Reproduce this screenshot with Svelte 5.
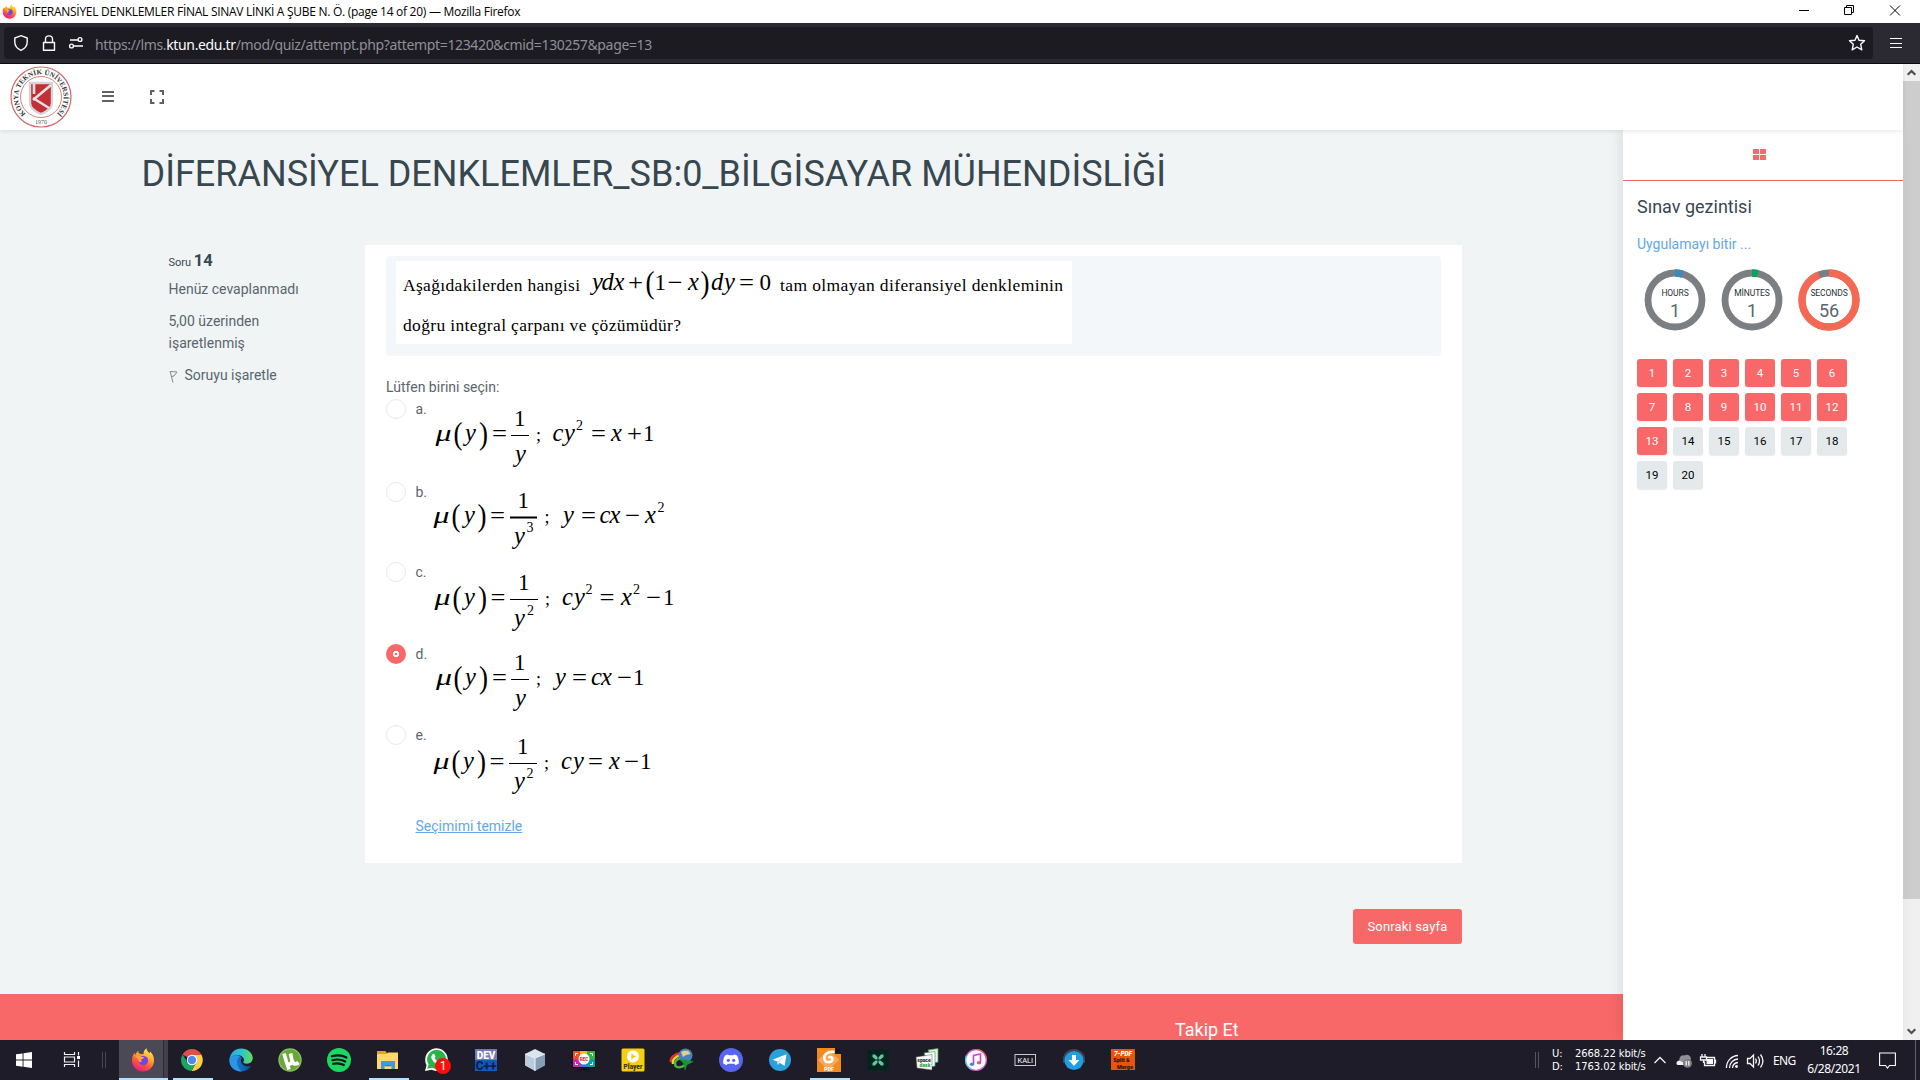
<script>
  const formulas = [
    {
      letter: 'a.', height: 83, top: 399, rule: [511, 529, 435.5, 1],
      parts: [
        ['u', 435.5, 441, 'μ'], ['p', 453.5, 443.5, '('], ['i', 465, 441, 'y'], ['p', 479, 443.5, ')'],
        ['o', 492, 441, '='], ['n', 514, 426, '1'], ['i', 515, 462, 'y'], ['t', 536, 441, ';'],
        ['i', 552.5, 441, 'c'], ['i', 564, 441, 'y'], ['s', 576, 430, '2'], ['o', 591, 441, '='],
        ['i', 611, 441, 'x'], ['o', 627, 441, '+'], ['n', 643, 441, '1']
      ]
    },
    {
      letter: 'b.', height: 80, top: 482, rule: [510, 537, 517, 2],
      parts: [
        ['u', 433.5, 523, 'μ'], ['p', 451.5, 525.5, '('], ['i', 464, 523, 'y'], ['p', 477.5, 525.5, ')'],
        ['o', 490, 523, '='], ['n', 517.5, 508, '1'], ['i', 514, 544, 'y'], ['s', 526.5, 532, '3'], ['t', 544.5, 523, ';'],
        ['i', 563, 523, 'y'], ['o', 581, 523, '='], ['i', 599.5, 523, 'c'], ['i', 609.5, 523, 'x'],
        ['o', 625, 523, '−'], ['i', 645, 523, 'x'], ['s', 657.5, 512, '2']
      ]
    },
    {
      letter: 'c.', height: 82, top: 562, rule: [510, 538, 599.5, 1],
      parts: [
        ['u', 434.5, 605, 'μ'], ['p', 452.5, 607.5, '('], ['i', 464, 605, 'y'], ['p', 478, 607.5, ')'],
        ['o', 490.5, 605, '='], ['n', 518, 590, '1'], ['i', 514, 626, 'y'], ['s', 527, 614.5, '2'], ['t', 545, 605, ';'],
        ['i', 562, 605, 'c'], ['i', 574, 605, 'y'], ['s', 585.5, 594, '2'], ['o', 599.5, 605, '='],
        ['i', 621, 605, 'x'], ['s', 633, 594, '2'], ['o', 646, 605, '−'], ['n', 663, 605, '1']
      ]
    },
    {
      letter: 'd.', height: 81, top: 644, rule: [511, 529, 679.5, 1],
      parts: [
        ['u', 436, 685, 'μ'], ['p', 453.5, 687.5, '('], ['i', 465, 685, 'y'], ['p', 479, 687.5, ')'],
        ['o', 492, 685, '='], ['n', 514, 670, '1'], ['i', 515, 706, 'y'], ['t', 536, 685, ';'],
        ['i', 555, 685, 'y'], ['o', 572, 685, '='], ['i', 591, 685, 'c'], ['i', 601, 685, 'x'],
        ['o', 617, 685, '−'], ['n', 633, 685, '1']
      ]
    },
    {
      letter: 'e.', height: 81, top: 725, rule: [509, 537, 763.5, 1],
      parts: [
        ['u', 433.5, 769, 'μ'], ['p', 451.5, 771.5, '('], ['i', 463, 769, 'y'], ['p', 477, 771.5, ')'],
        ['o', 489.5, 769, '='], ['n', 517, 754, '1'], ['i', 514, 789, 'y'], ['s', 526.5, 778, '2'], ['t', 544, 769, ';'],
        ['i', 561, 769, 'c'], ['i', 573, 769, 'y'], ['o', 588, 769, '='], ['i', 609, 769, 'x'],
        ['o', 624, 769, '−'], ['n', 640, 769, '1']
      ]
    }
  ];
  const stem = [
    ['i', 592, 290, 'y'], ['i', 601.5, 290, 'd'], ['i', 613.5, 290, 'x'], ['o', 628, 290, '+'],
    ['p', 645.5, 292.5, '('], ['n', 654.5, 290, '1'], ['o', 667.5, 290, '−'], ['i', 688, 290, 'x'],
    ['p', 700.5, 292.5, ')'], ['i', 711, 290, 'd'], ['i', 724, 290, 'y'], ['o', 739, 290, '='], ['n', 759.5, 290, '0']
  ];
  // widths, in px, of the stretched symbols: mu, parentheses, operators
  const stretch = { u: 16, p: 9, o: 15 };
  const pages = Array.from({ length: 20 }, (_, i) => i + 1);
  const timers = [
    { label: 'HOURS', value: 1, color: '#398bbd', base: '#7b7e82', part: 4.5 },
    { label: 'MİNUTES', value: 1, color: '#00a65a', base: '#7b7e82', part: 3.5 },
    { label: 'SECONDS', value: 56, color: '#f56954', base: '#7b7e82', part: 94 }
  ];
  const apps = ['firefox', 'chrome', 'edge', 'utorrent', 'spotify', 'explorer', 'whatsapp', 'devcpp', 'vbox', 'rec', 'player', 'idm', 'discord', 'telegram', 'foxit', 'camtasia', 'spacedesk', 'itunes', 'kali', 'downloader', 'pdf7'];
  const running = ['chrome', 'explorer', 'foxit'];
</script>

{#snippet glyphs(parts)}
  {#each parts as [kind, x, y, t]}
    <text class="m {kind}" {x} {y} textLength={stretch[kind]} lengthAdjust={stretch[kind] ? 'spacingAndGlyphs' : undefined}>{t}</text>
  {/each}
{/snippet}

{#snippet firefox()}
  <defs>
    <linearGradient id="fx" x1=".8" y1="0" x2=".3" y2="1">
      <stop offset="0" stop-color="#fff14a" /><stop offset=".35" stop-color="#ffb02e" />
      <stop offset=".65" stop-color="#ff5a36" /><stop offset="1" stop-color="#e8188c" />
    </linearGradient>
  </defs>
  <path fill="url(#fx)" d="M12 23.5C5.500 23.500 1 18.500 1 12.500 1 9 2.200 6.500 3.500 4.800 3.700 5.800 4 6.500 4.500 7 5 5 6 3.500 7.200 3 7 4.500 8 5.500 9.500 6 11 6 12 6.200 12.500 6.500 12.300 4 13.500 1.500 15.500.3 15.500 2.500 17 3.700 18.500 5.200 19 4.700 19 4 19 3.500 21.500 5.500 23.300 9 23 13 22.600 19 18 23.500 12 23.500Z" />
  <circle cx="12.300" cy="12.700" r="4.800" fill="#7543e0" />
  <path fill="#ffa436" d="M4 7.500C6.500 6.500 9 8 10 8.700L13.300 9.200C12.800 10.600 11.500 10.700 10.500 11.200 10 12 10 13 11 13.500 9 15 7 13.500 7.300 11.500 6.500 10 5 9.500 4 7.500Z" />
{/snippet}

{#snippet appIcon(name)}
  <svg width="24" height="24" viewBox="0 0 24 24">
    {#if name === 'firefox'}
      {@render firefox()}
    {:else if name === 'chrome'}
      <path fill="#dd5144" d="M12 12 2.500 6.500A11 11 0 0 1 21.500 6.500L21.800 7H12Z" />
      <path fill="#ffcd46" d="M12 12 21.600 7A11 11 0 0 1 11.500 23L16.300 14.500 12 7H21.600" />
      <path fill="#1da462" d="M2.500 6.500A11 11 0 0 0 11.500 23L16.300 14.500 12 17 7.700 14.500Z" />
      <circle cx="12" cy="12" r="5.200" fill="#fff" /><circle cx="12" cy="12" r="4.200" fill="#4c8bf5" />
    {:else if name === 'edge'}
      <defs>
        <linearGradient id="edg" x1="0" x2="1"><stop offset="0" stop-color="#2aa8e8" /><stop offset=".55" stop-color="#2fc6c9" /><stop offset="1" stop-color="#6bdb4b" /></linearGradient>
        <linearGradient id="edb" x1="0" x2="1"><stop offset="0" stop-color="#1b8ade" /><stop offset="1" stop-color="#0a4f9e" /></linearGradient>
      </defs>
      <path fill="url(#edb)" d="M.5 11C1 8 6 6 10.500 7.500L13 10C11 11.500 11 17 18 18.300 20 18.600 21.500 18 22.300 17.300 20.500 21 16.500 23.500 12 23.500 5.500 23.500-.3 18 .5 11Z" />
      <path fill="#2b97e4" d="M.5 12C2 8 7 6.500 11 8.500 7 10.500 6.500 18 12.500 23.400 5.500 23.500 0 18.500 .5 12Z" />
      <path fill="url(#edg)" d="M.5 11.500C1 5 6 .5 12 .5 19 .5 23.800 5.500 23.800 10 23.800 13.500 21 15.700 18 15.700 15 15.700 13.700 14.800 14.400 13.800 15.800 11.800 14.500 8.300 10.500 7.300 6 6.500 2 8 .5 11.500Z" />
    {:else if name === 'utorrent'}
      <circle cx="12" cy="12" r="11.700" fill="#8cc063" /><circle cx="12" cy="12" r="10.500" fill="#68a83b" />
      <path fill="none" stroke="#fff" stroke-width="3.600" d="M6 5.500 8.500 14C9.500 17.500 14.500 16.500 14 12.500L12.500 5.500M14.500 13C15.500 17 18 16.500 20.500 14.500M8.500 14 11 21.500" />
    {:else if name === 'spotify'}
      <circle cx="12" cy="12" r="12" fill="#1ed760" />
      <path fill="none" stroke="#12131a" stroke-linecap="round" stroke-width="2.200" d="M4.800 8.300C10 6.800 15.500 7.300 19.500 9.500M5.500 12.200C10 11 14.500 11.500 18.200 13.500M6.200 15.800C10 14.900 13.700 15.300 16.800 17" />
    {:else if name === 'explorer'}
      <path fill="#e5a50f" d="M1 3H9.500L11 5V8H1Z" /><path fill="#ffd869" d="M1 6H10.500L12 4.500H22V21H1Z" />
      <path fill="#3f98e0" d="M5 13H19V21H15.500V17H8.500V21H5Z" /><path fill="#2d7fc9" d="M8.500 17H15.500V18.300H8.500Z" />
    {:else if name === 'whatsapp'}
      <path fill="#fff" d="M0 23 1.500 17A11.300 11.300 0 1 1 6.500 21.800Z" /><path fill="#29b545" d="M2.200 20.800 3.600 16.500A9.500 9.500 0 1 1 7 19.700Z" />
      <path fill="#fff" d="M8 6 9.200 5.800 10.500 8.500 9.500 10C10.500 12 12 13 13.500 13.700L15 12.500 17.500 13.800C17.500 16 15.500 17 13.500 16.500 9.500 15.500 7 12.300 6.300 10 6 8.500 7 6.500 8 6Z" />
      <circle cx="18" cy="18" r="8" fill="#fb0f0c" /><text x="18" y="22.300" text-anchor="middle" font-size="12" fill="#fff">1</text>
    {:else if name === 'devcpp'}
      <path fill="#7779b5" d="M1 1H23V12H1Z" /><path fill="#1259b8" d="M1 12H23V23H1Z" />
      <text x="12" y="11" class="bold" text-anchor="middle" font-size="10" fill="#fff">DEV</text><text x="12" y="22" class="bold" text-anchor="middle" font-size="12" fill="#0a1e52">C++</text>
    {:else if name === 'vbox'}
      <path fill="#d8e4ee" d="M12 1 22 6 12 10 2 6Z" /><path fill="#b9cbdc" d="M2 6 12 10V23L2 17.500Z" /><path fill="#859fb8" d="M22 6 12 10V23L22 17.500Z" /><path fill="none" stroke="#eef6fb" d="M2 6 12 10 22 6M12 10V23" />
    {:else if name === 'rec'}
      <path fill="#111" d="M0 2H24V20H15V21.500H19V22.500H5V21.500H9V20H0Z" />
      <path fill="#f04e23" d="M1 3H8V11H1Z" /><path fill="#f5b915" d="M8 3H15V11H8Z" /><path fill="#37b34a" d="M15 3H23V11H15Z" /><path fill="#c42bb0" d="M1 11H9V19H1Z" /><path fill="#2a7de1" d="M9 11H16V19H9Z" /><path fill="#00a79d" d="M16 11H23V19H16Z" />
      <path fill="none" stroke="#fff" d="M3.500 8V5.500H6M18 5.500H20.500V8M3.500 14V16.500H6M18 16.500H20.500V14" /><circle cx="12" cy="11" r="5.500" fill="#fff" /><text x="12" y="12.800" class="bold" text-anchor="middle" font-size="4.600" fill="#e32a35">REC</text>
    {:else if name === 'player'}
      <rect x=".5" y=".5" width="23" height="23" rx="1.500" fill="#f4cf14" /><circle cx="12" cy="8.500" r="6" fill="#fff" /><path fill="#f4cf14" d="M10.300 5.500 15 8.500 10.300 11.500Z" /><text x="12" y="21" class="bold" text-anchor="middle" font-size="6.500" fill="#3c3305">Player</text>
    {:else if name === 'idm'}
      <g fill="none" stroke-width="2.400"><path stroke="#e23329" d="M11 5C4 6 0 10 .8 14" /><path stroke="#f4d229" d="M11 7.500C5 8 2 12 3 16" /><path stroke="#4bb748" d="M11 10C6 11 4 14 5.500 18 8 20.500 12 19 15 17" /></g>
      <circle cx="15.500" cy="7.500" r="7" fill="#4a81bd" /><path fill="#e0cf8e" d="M11 4C14 1.500 17 3.500 18 2.500L20.500 6 16 7 13 9Z" />
      <path fill="#15972e" d="M10 11 24 13.500 17 17 15 23 13.500 16Z" />
    {:else if name === 'discord'}
      <circle cx="12" cy="12" r="12" fill="#5865f2" />
      <path fill="#fff" d="M8.500 6.500 10 7.300H14L15.500 6.500 18 7.500C19.500 10 20 12.500 19.800 15.500L16.500 17.300 15.300 15.700H8.700L7.500 17.300 4.200 15.500C4 12.500 4.500 10 6 7.500Z" /><circle cx="9.300" cy="12.300" r="1.600" fill="#5865f2" /><circle cx="14.700" cy="12.300" r="1.600" fill="#5865f2" />
    {:else if name === 'telegram'}
      <circle cx="12" cy="12" r="11" fill="#2ca0da" /><path fill="#fff" d="M4.500 11.800 18.500 6.300 16.500 18 11.800 14.800 9.800 17 9.300 13.500Z" /><path fill="#b9d9ec" d="M9.300 13.500 16 8.500 11 14.500 9.800 17Z" />
    {:else if name === 'foxit'}
      <path fill="#f28a1e" d="M0 0H18V6H24V24H0Z" /><path fill="#111" d="M19.500 0 24 4.500H19.500Z" /><path fill="#f8aa56" d="M1 12 12 2 22 12 15 19H8Z" />
      <path fill="none" stroke="#fff" stroke-width="2.500" d="M17.500 4C10 3 6 7 7.500 11.500 9 15.500 15.500 15 15.500 10.500 14.500 8.500 12.500 8.800 11.500 10" /><text x="12" y="22.500" class="bold" text-anchor="middle" font-size="5.500" fill="#fff">PDF</text>
    {:else if name === 'camtasia'}
      <rect x="1.500" y="1.500" width="21" height="21" rx="3" fill="#04231d" />
      <path fill="#63c7a5" d="M6.500 6.500H9L11.500 9V11.500H9.500L6.500 9ZM17.500 6.500V9L14.500 11.500H12.500V9.500L15 6.500ZM6.500 17.500V15L9.500 12.500H11.500V14.500L9 17.500ZM17.500 17.500H15L12.500 15V12.500H14.500L17.500 15Z" />
    {:else if name === 'spacedesk'}
      <path fill="#e8f1e6" stroke="#4b9f5b" stroke-width=".7" d="M13 2 23 .5V14L19 15Z" /><path fill="#fff" stroke="#4b9f5b" stroke-width=".7" d="M9 5 20 3.500V18L15 19Z" /><path fill="#f7f7f7" stroke="#555" stroke-width=".5" d="M1 9 17 6.500V22L2 20Z" />
      <text x="9" y="14" class="bold" text-anchor="middle" font-size="5" fill="#333">space</text><text x="10" y="19" class="bold" text-anchor="middle" font-size="5" fill="#25a244">desk</text>
    {:else if name === 'itunes'}
      <circle cx="12" cy="12" r="11" fill="#d962c9" /><path fill="#5fc3f0" d="M2 7A11 11 0 0 0 8 22.200Z" /><path fill="#f05a6f" d="M12 1A11 11 0 0 1 23 12H12Z" /><circle cx="12" cy="12" r="9.700" fill="#fff" />
      <path fill="none" stroke="#c04bd3" stroke-width="1.700" d="M9.500 16V7.500L16.500 6V14.500" /><ellipse cx="8" cy="16.200" rx="2.200" ry="1.800" fill="#5a78e8" /><ellipse cx="15" cy="14.800" rx="2.200" ry="1.800" fill="#ee4c82" />
    {:else if name === 'kali'}
      <rect x="2" y="6.500" width="20.500" height="11" fill="none" stroke="#c9c9cf" /><text x="12.300" y="14.700" text-anchor="middle" font-size="7.500" fill="#fff">KALI</text>
    {:else if name === 'downloader'}
      <path fill="none" stroke="#434653" stroke-width="2" d="M2 15V11A10 9 0 0 1 22 11V15" /><circle cx="12" cy="12.500" r="9.500" fill="#1f9fe3" /><path fill="#fff" d="M10 7H14V12H17.500L12 18 6.500 12H10Z" />
    {:else}
      <path fill="#e8530e" d="M0 1H24V22H0Z" /><text x="12" y="7.500" class="bold" font-style="italic" text-anchor="middle" font-size="6.500" fill="#fff">7-PDF</text><text x="10.500" y="14" class="bold" text-anchor="middle" font-size="5.500" fill="#331505">Split &amp;</text><text x="14" y="20.500" class="bold" text-anchor="middle" font-size="5.500" fill="#331505">Merge</text>
    {/if}
  </svg>
{/snippet}

<div class="screen">
  <div class="titlebar">
    <svg width="15" height="15" viewBox="0 0 24 24">{@render firefox()}</svg>
    <span class="wtitle">DİFERANSİYEL DENKLEMLER FİNAL SINAV LİNKİ A ŞUBE N. Ö. (page 14 of 20) — Mozilla Firefox</span>
    <svg class="winctl" width="110" height="23" viewBox="0 0 110 23" fill="none" stroke="#000">
      <path d="M4 10.500H14M49.500 7.500H56.500V14.500H49.500ZM51.500 7V5.500H58.500V12.500H57M95 5.500 105 15.500M105 5.500 95 15.500" />
    </svg>
  </div>

  <div class="navbar">
    <div class="url">
      <svg width="64" height="18" viewBox="0 0 64 18" fill="none" stroke="#fbfbfe" stroke-width="1.400">
        <path d="M7 1.700 13.200 4V8C13.200 12 10.800 14.700 7 16.400 3.200 14.700.8 12 .8 8V4Z" />
        <path d="M29.500 8.500H40.500V16.300H29.500ZM31.500 8.500V5C31.500.8 38.500.8 38.500 5V8.500" stroke-linejoin="round" />
        <path d="M57 6H65M61 12H70" transform="translate(-1)" /><circle cx="67" cy="5.500" r="1.900" transform="translate(-1)" /><circle cx="58.500" cy="12" r="1.900" transform="translate(-1)" />
      </svg>
      <span class="addr">https://lms.<b>ktun.edu.tr</b>/mod/quiz/attempt.php?attempt=123420&amp;cmid=130257&amp;page=13</span>
      <svg class="star" width="18" height="18" viewBox="0 0 18 18" fill="none" stroke="#fbfbfe" stroke-width="1.400" stroke-linejoin="round"><path d="M9 1.500 11 6.200 16.500 6.700 12.700 10.300 13.800 15.800 9 13 4.200 15.800 5.300 10.300 1.500 6.700 7 6.200Z" /></svg>
    </div>
    <svg class="burger" width="12" height="11" viewBox="0 0 12 11" stroke="#fbfbfe"><path d="M0 .5H12M0 5.500H12M0 9.500H12" /></svg>
  </div>

  <div class="browser">
    <div class="page">
      <header>
        <svg class="logo" width="62" height="62" viewBox="-31 -31 62 62">
          <circle r="30" fill="#fff" stroke="#cf6a6b" stroke-width="1.200" /><circle r="20.500" fill="none" stroke="#d88284" stroke-width="1" />
          <path id="ring" fill="none" d="M-14.500 17.500A22.700 22.700 0 1 1 14.500 17.500" />
          <text class="ringtext"><textPath href="#ring" textLength="108" startOffset="1">KONYA TEKNİK ÜNİVERSİTESİ</textPath></text>
          <path fill="#c22f34" stroke="#d4d4d8" stroke-width="2.400" d="M-11-14H11V6C11 12 5 15 0 17-5 15-11 12-11 6Z" />
          <path fill="none" stroke="#e4e2e3" stroke-width="2.600" d="M-7-13V-3M-8 1 8 11M-8 3 10-12" />
          <text x="0" y="27" text-anchor="middle" class="year">1970</text>
        </svg>
        <svg width="12" height="12" viewBox="0 0 12 12" stroke="#616161" stroke-width="2"><path d="M0 1H12M0 5H12M0 10H12" /></svg>
        <svg class="full" width="14" height="14" viewBox="0 0 14 14" fill="none" stroke="#616161" stroke-width="2"><path d="M1 5V1H4.500M9.500 1H13V5M13 9V13H9.500M4.500 13H1V9" /></svg>
      </header>

      <div class="body">
        <main>
          <h1>DİFERANSİYEL DENKLEMLER_SB:0_BİLGİSAYAR MÜHENDİSLİĞİ</h1>
          <div class="question">
            <aside class="info">
              <div class="no">Soru <b>14</b></div>
              <div class="state">Henüz cevaplanmadı</div>
              <div class="grade">5,00 üzerinden<br />işaretlenmiş</div>
              <div class="flag">
                <svg width="9" height="11" viewBox="0 0 9 11" fill="none" stroke="#85898d"><path d="M1 1 4 12.500M1.500 1.500 8 2 5 6 2.500 6.500" /></svg>Soruyu işaretle
              </div>
            </aside>
            <section class="card">
              <div class="stem">
                <svg class="stemimg" width="676" height="83" viewBox="396 261 676 83">
                  <text class="serif" x="403" y="291" textLength="177">Aşağıdakilerden hangisi</text>
                  {@render glyphs(stem)}
                  <text class="serif" x="780" y="291" textLength="283">tam olmayan diferansiyel denkleminin</text>
                  <text class="serif" x="403" y="331" textLength="278">doğru integral çarpanı ve çözümüdür?</text>
                </svg>
              </div>
              <div class="prompt">Lütfen birini seçin:</div>
              {#each formulas as f}
                <div class="option" style:height="{f.height}px">
                  <span class="radio" class:on={f.letter === 'd.'}></span>
                  <span class="letter">{f.letter}</span>
                  <svg width="260" height="70" viewBox="430 {f.top} 260 70">
                    {@render glyphs(f.parts)}
                    <rect x={f.rule[0]} y={f.rule[2] - 0.5} width={f.rule[1] - f.rule[0]} height={f.rule[3]} />
                  </svg>
                </div>
              {/each}
              <a class="clear" href="#clear">Seçimimi temizle</a>
            </section>
          </div>
          <div class="actions"><button class="next">Sonraki sayfa</button></div>
          <footer><span>Takip Et</span></footer>
        </main>

        <aside class="side">
          <div class="tab">
            <svg width="13" height="11" viewBox="0 0 13 11" fill="#f96868"><rect width="6" height="5" rx=".5" /><rect x="7" width="6" height="5" rx=".5" /><rect y="6" width="6" height="5" rx=".5" /><rect x="7" y="6" width="6" height="5" rx=".5" /></svg>
          </div>
          <h2>Sınav gezintisi</h2>
          <a class="finish" href="#finish">Uygulamayı bitir ...</a>
          <div class="timers">
            {#each timers as t}
              <svg width="62" height="62" viewBox="0 0 62 62">
                <circle cx="31" cy="31" r="27" fill="none" stroke={t.base} stroke-width="6.800" />
                <circle cx="31" cy="31" r="27" fill="none" stroke={t.color} stroke-width="7.500" pathLength="100" stroke-dasharray="{t.part} 100" transform="rotate(-90 31 31)" />
                <text x="31" y="26.500" class="tl">{t.label}</text>
                <text x="31" y="48" class="tv">{t.value}</text>
              </svg>
            {/each}
          </div>
          <div class="pages">
            {#each pages as p}<span class:done={p <= 13}>{p}</span>{/each}
          </div>
        </aside>
      </div>
    </div>

    <div class="scroll">
      <div class="arrow"><svg width="9" height="7" viewBox="0 0 9 7" fill="none" stroke="#505050" stroke-width="2.200"><path d="M.7 5.800 4.500 2 8.300 5.800" /></svg></div>
      <div class="thumb"></div>
      <div class="arrow end"><svg width="9" height="7" viewBox="0 0 9 7" fill="none" stroke="#505050" stroke-width="2.200"><path d="M.7 1.200 4.500 5 8.300 1.200" /></svg></div>
    </div>
  </div>

  <div class="taskbar">
    <svg class="start" width="119" height="40" viewBox="0 0 119 40">
      <path fill="#fff" d="M16 14.300 22.600 13.400V19.500H16ZM23.500 13.200 32 12V19.500H23.500ZM16 20.500H22.600V26.700L16 25.800ZM23.500 20.500H32V28L23.500 26.800Z" />
      <path fill="none" stroke="#f2f2f4" stroke-width="1.200" d="M64.500 12V14.500H74.500V12M64.500 27V24.500H74.500V27M64.500 17H74.500V22H64.500ZM78.500 12V15.500M78.500 20.500V27" /><path fill="#fff" d="M77 16H80V19H77Z" />
      <path stroke="#45444f" d="M102.500 12V28M105.500 12V28" />
    </svg>
    {#each apps as a}
      <div class="app" class:active={a === 'firefox'} class:running={running.includes(a)}>{@render appIcon(a)}</div>
    {/each}
    <div class="tray">
      <svg class="grip" width="5" height="16" viewBox="0 0 5 16" stroke="#55545f"><path d="M.5 0V16M3.500 0V16" /></svg>
      <div class="net"><span>U:</span><span>2668.22 kbit/s</span><span>D:</span><span>1763.02 kbit/s</span></div>
      <svg class="trayicons" width="116" height="20" viewBox="0 0 116 20" fill="none" stroke="#f4f4f6" stroke-width="1.300">
        <path d="M1.500 13 7 7.500 12.500 13" />
        <path fill="#8f8f95" stroke="none" d="M27 13C25 8 28 4.500 31.500 5.500 34 3.500 38 5.500 38 9L32 15H25Z" /><path fill="#f0f0f2" stroke="none" d="M24.500 15C22.500 14 23.500 10.500 26.500 10.500L31 13V15Z" />
        <circle cx="34.500" cy="13.300" r="4.500" fill="#7f7f84" stroke="none" /><path d="M33.200 11V15.500M35.800 11V15.500" />
        <g transform="translate(1)"><path d="M52 7.500H60.500V15.500H50.500V11.500M61.500 9.500V13.500M48 4V7M51 4V7M46.500 7H52.500V10H46.500ZM49.500 10V13" /><path stroke="none" fill="#fff" d="M52.500 9H59V14H52.500Z" /></g>
        <path d="M73.500 18A12 12 0 0 1 85 5.500" /><path d="M76.500 18A9 9 0 0 1 85 9" /><path d="M79.500 18A6 6 0 0 1 85 12.500" /><circle cx="83.500" cy="16.500" r="1.400" fill="#fff" stroke="none" />
        <path d="M94.500 8.500H97L100.500 5V17L97 13.500H94.500ZM102.500 8.500C103.500 10 103.500 12 102.500 13.500M105 6.500C107 9.500 107 12.500 105 15.500M107.500 4.500C110.500 8.500 110.500 13.500 107.500 17.500" />
      </svg>
      <span class="lang">ENG</span>
      <div class="clock"><span>16:28</span><span>6/28/2021</span></div>
      <svg class="note" width="17" height="17" viewBox="0 0 17 17" fill="none" stroke="#fff" stroke-width="1.100"><path d="M.6 1H16.400V13.500H10.500L8.500 16 6.500 13.500H.6Z" /></svg>
      <div class="peek"></div>
    </div>
  </div>
</div>

<style>
  :global(body) { overflow: hidden; }
  .screen { width: 1920px; height: 1080px; display: flex; flex-direction: column; font-family: Roboto, sans-serif; font-size: 14px; color: #58666e; overflow: hidden; }
  .screen, .screen * { box-sizing: border-box; }
  svg { display: block; flex: none; overflow: visible; }

  .titlebar { height: 23px; flex: none; display: flex; align-items: center; background: #fff; padding-left: 2px; color: #000; font: 12px/23px 'Open Sans', 'Noto Sans', sans-serif; }
  .wtitle { margin-left: 6px; letter-spacing: -0.275px; white-space: nowrap; }
  .winctl { margin-left: auto; margin-right: 15px; }

  .navbar { height: 41px; flex: none; display: flex; align-items: center; background: #2b2a33; border-bottom: 1px solid #0c0c0d; padding-left: 4px; }
  .url { width: 1869px; height: 32px; border-radius: 4px; background: #1c1b22; display: flex; align-items: center; padding: 0 7px 0 10px; }
  .addr { margin-left: 17px; color: #8f8f96; font: 14px/32px 'Noto Sans', sans-serif; letter-spacing: -.35px; white-space: nowrap; padding-top: 3px; }
  .addr b { color: #fbfbfe; font-weight: 400; }
  .star { margin-left: auto; }
  .burger { margin-left: 17px; }

  .browser { display: flex; height: 976px; flex: none; overflow: hidden; }
  .page { width: 1903px; display: flex; flex-direction: column; }
  header { position: relative; z-index: 2; height: 66px; flex: none; background: #fff; display: flex; align-items: center; padding-left: 10px; box-shadow: 0 2px 4px rgba(0, 0, 0, .08); }
  header svg + svg { margin-left: 30px; }
  header svg.full { margin-left: 36px; }
  .ringtext { font: bold 7px 'Liberation Serif', serif; fill: #333; }
  .year { font: 6px 'Liberation Serif', serif; fill: #555; }

  .body { display: flex; height: 910px; }
  main { width: 1623px; background: #f0f4f5; display: flex; flex-direction: column; }
  h1 { margin: 21px 0 0 141.500px; height: 48px; font-weight: 400; font-size: 36px; line-height: 46px; color: #37474f; white-space: nowrap; }
  .question { display: flex; margin: 46px 0 0 168px; height: 618px; }
  .info { width: 197px; padding: 6px 0 0 .5px; line-height: 22px; }
  .no { font-size: 11px; height: 22px; line-height: 20px; color: #37474f; }
  .no b { font-size: 16.500px; }
  .state { height: 32px; padding-top: 5px; }
  .grade { height: 54px; padding-top: 5px; }
  .flag { display: flex; align-items: center; gap: 7px; padding-top: 5px; }
  .card { width: 1097px; background: #fff; padding: 11px 21px 0; }
  .stem { height: 100px; width: 1055px; background: #f3f7f9; border-radius: 4px; padding: 5px 10px; }
  .stemimg { background: #fff; }
  .serif { font: 17.500px 'Liberation Serif', serif; fill: #000; }
  .m { font-family: 'Liberation Serif', serif; font-size: 23px; fill: #000; }
  .m.i { font-style: italic; font-size: 24.500px; }
  .m.u { font-style: italic; }
  .m.s { font-size: 14px; }
  .m.t { font-size: 18px; }
  .m.p { font-size: 32px; }
  .prompt { margin-top: 20px; height: 23px; line-height: 22px; }
  .option { display: flex; }
  .radio { width: 20px; height: 20px; border-radius: 50%; border: 1px solid #e4eaec; background: #fff; flex: none; }
  .radio.on { border: 0; background: radial-gradient(circle, #f96868 0 1px, #fff 1.400px 2.800px, #f96868 3.300px); }
  .letter { width: 24px; padding-left: 9.500px; line-height: 20px; height: 20px; }
  .clear { display: block; width: max-content; margin: 9px 0 0 29.500px; color: #62a8ea; text-decoration: underline; line-height: 22px; }
  .actions { height: 131px; padding: 46px 0 0 1353px; }
  .next { width: 109px; height: 35px; border: 0; border-radius: 3px; background: #f96868; color: #fff; font: 13px Roboto, sans-serif; letter-spacing: .15px; padding: 0; }
  footer { height: 46px; background: #f96868; color: #fff; font-size: 18px; line-height: 26px; padding: 23px 0 0 1175px; }

  .side { position: relative; width: 280px; background: #fff; box-shadow: -3px 0 12px rgba(0, 0, 0, .09); }
  .tab { height: 51px; border-bottom: 1px solid #f96868; display: flex; align-items: center; justify-content: center; padding: 0 7px 2px 0; }
  h2 { margin: 13px 0 0 14px; font-weight: 400; font-size: 18px; line-height: 26px; color: #37474f; }
  .finish { display: block; margin: 13px 0 0 14px; color: #62a8ea; text-decoration: none; line-height: 22px; }
  .timers { display: flex; gap: 15px; margin: 14px 0 0 21px; }
  .tl { font-size: 8.500px; text-anchor: middle; fill: #263238; letter-spacing: -.1px; }
  .tv { font-size: 18px; text-anchor: middle; fill: #58666e; }
  .pages { display: grid; grid-template-columns: repeat(6, 30px); gap: 6px; margin: 28px 0 0 14px; }
  .pages span { height: 28px; border-radius: 3px; background: #e4eaec; color: #000; font: 11.500px/29px Roboto, sans-serif; text-align: center; box-shadow: 0 1px 1px rgba(0, 0, 0, .08); }
  .pages span.done { background: #f96868; color: #fff; }

  .scroll { width: 17px; background: #f0f0f0; display: flex; flex-direction: column; }
  .arrow { height: 17px; display: flex; align-items: center; justify-content: center; }
  .thumb { height: 818px; background: #cdcdcd; }
  .arrow.end { margin-top: auto; }

  .taskbar { height: 40px; flex: none; display: flex; background: #1d1c28; color: #fff; font-family: 'Noto Sans', sans-serif; }
  .app { width: 49px; height: 40px; flex: none; display: flex; align-items: center; justify-content: center; padding-right: 1px; background: linear-gradient(#b4e1fb, #b4e1fb) center bottom / 0 2px no-repeat; }
  .app text { font-family: Roboto, sans-serif; }
  .bold { font-weight: 900; }
  .app.active { background: linear-gradient(#b4e1fb, #b4e1fb) left bottom / 100% 2px no-repeat, linear-gradient(90deg, #4a4955 44px, #2b2a33 44px 45px, #41404b 45px); }
  .app.running { background-size: 40px 2px; }
  .tray { margin-left: auto; display: flex; align-items: center; }
  .net { display: grid; grid-template-columns: 23px 72px; row-gap: 0; margin-left: 12px; font: 10px/13px 'DejaVu Sans', sans-serif; white-space: nowrap; }
  .net span { letter-spacing: -.1px; }
  .trayicons { margin-left: 6px; }
  .lang { width: 23px; margin-left: 4px; font-size: 12px; letter-spacing: -.6px; }
  .clock { width: 60px; margin-left: 8px; display: flex; flex-direction: column; align-items: center; font-size: 12px; line-height: 18px; letter-spacing: -.4px; }
  .note { margin-left: 15px; }
  .peek { width: 5px; height: 40px; border-left: 1px solid #62616b; margin-left: 19px; }
</style>
